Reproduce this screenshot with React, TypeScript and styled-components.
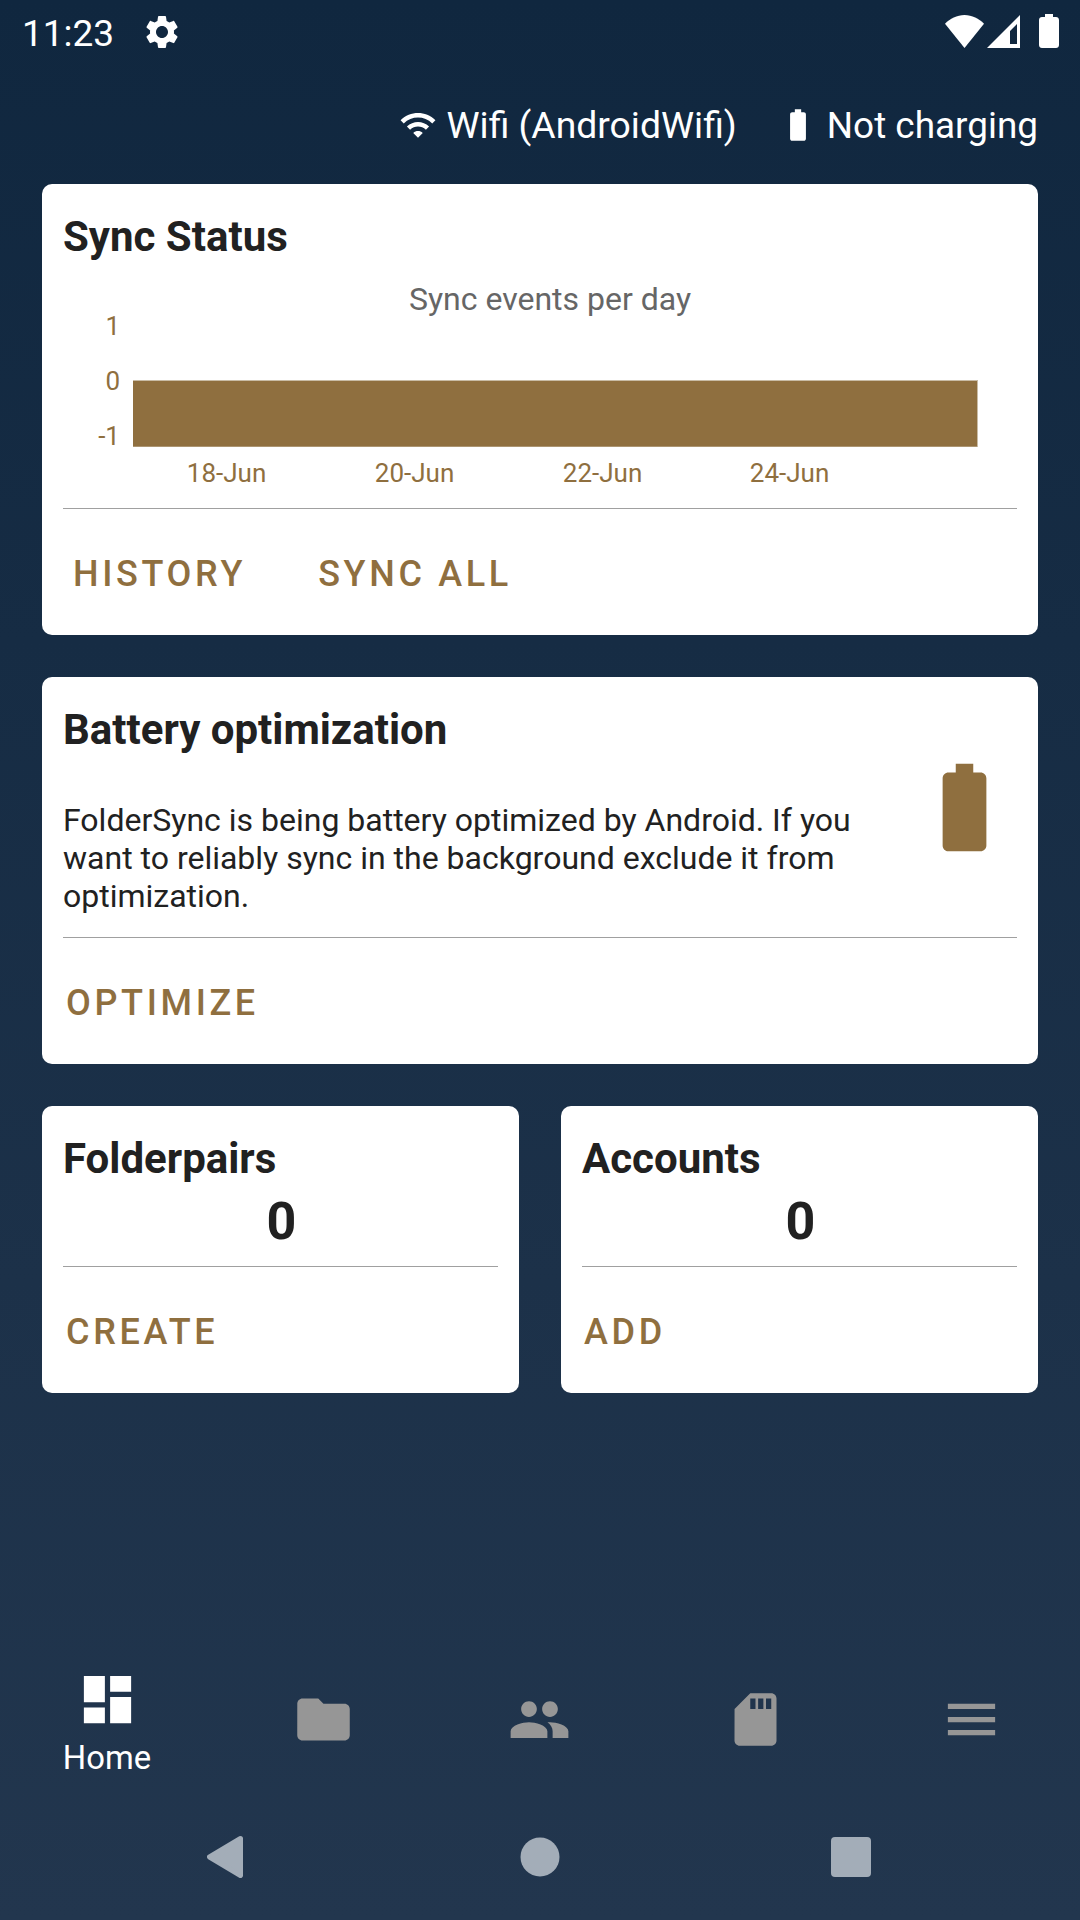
import React from "react";
import styled, { createGlobalStyle } from "styled-components";

const BROWN = "#8f6f3f";
const NAV_KEY = "#a3adb8";

const GlobalStyle = createGlobalStyle`
  html, body {
    margin: 0;
    padding: 0;
    background: #10273f;
  }
  * {
    box-sizing: border-box;
  }
`;

const Screen = styled.div`
  width: 1080px;
  height: 1920px;
  display: flex;
  flex-direction: column;
  overflow: hidden;
  font-family: Roboto, "Liberation Sans", sans-serif;
  background: linear-gradient(180deg, #10273f 0%, #22364e 100%);
`;

const StatusBar = styled.div`
  height: 63px;
  flex: none;
  display: flex;
  align-items: center;
  padding: 0 21px 0 22px;
  color: #fff;
  font-size: 37px;
`;

const Clock = styled.span`
  margin-right: 28px;
  padding-top: 3px;
`;

const Spacer = styled.div`
  flex: 1;
`;

const StatusGlyphs = styled.div`
  display: flex;
  align-items: flex-end;
  gap: 3px;
  padding-bottom: 2px;
`;

const StatusBattery = styled.svg`
  margin-left: 16px;
`;

const Connection = styled.div`
  height: 121px;
  flex: none;
  display: flex;
  justify-content: flex-end;
  align-items: center;
  gap: 42px;
  padding: 3px 42px 0 0;
  color: #fff;
`;

const ConnectionItem = styled.div<{ $size: number }>`
  display: flex;
  align-items: center;
  gap: 10px;
  font-size: ${(p) => p.$size}px;
`;

const Content = styled.div`
  flex: 1;
  display: flex;
  flex-direction: column;
  gap: 42px;
  padding: 0 42px;
`;

const Card = styled.section<{ $half?: boolean }>`
  background: #fff;
  border-radius: 10px;
  padding: 0 21px;
  flex: ${(p) => (p.$half ? "1" : "none")};
  min-width: 0;
`;

const Row = styled.div`
  display: flex;
  gap: 42px;
`;

const Title = styled.h2<{ $h: number }>`
  margin: 0;
  padding-top: 28px;
  height: ${(p) => p.$h}px;
  font-size: 42px;
  line-height: 50px;
  font-weight: 700;
  color: #212121;
`;

const Divider = styled.div`
  height: 1px;
  background: #a0a0a0;
`;

const Actions = styled.div<{ $pad?: number }>`
  height: 126px;
  display: flex;
  align-items: center;
  gap: 72px;
  padding-top: 4px;
  padding-left: ${(p) => p.$pad ?? 3}px;
`;

const Action = styled.button`
  border: 0;
  padding: 0;
  background: none;
  font: 500 36px Roboto, sans-serif;
  letter-spacing: 3.65px;
  color: ${BROWN};
`;

const ChartFrame = styled.svg`
  display: block;
  width: 954px;
  height: 244px;
  font-family: Roboto, sans-serif;
`;

const OptimizeBody = styled.div`
  display: flex;
  height: 160px;
`;

const BodyText = styled.p`
  margin: 0;
  width: 830px;
  font-size: 32px;
  line-height: 38px;
  color: #212121;
  padding-top: 24px;
`;

const BatteryWrap = styled.div`
  flex: 1;
  display: flex;
  justify-content: flex-end;
  margin-top: -22px;
`;

const Count = styled.div`
  text-align: center;
  font-size: 52px;
  line-height: 58px;
  font-weight: 700;
  color: #212121;
  height: 74px;
  padding: 1px 0 0 2px;
`;

const BottomNav = styled.nav`
  flex: none;
  height: 150px;
  display: grid;
  grid-template-columns: repeat(5, 1fr);
`;

const NavItem = styled.div<{ $active?: boolean }>`
  display: flex;
  flex-direction: column;
  align-items: center;
  justify-content: ${(p) => (p.$active ? "flex-start" : "center")};
  padding-top: ${(p) => (p.$active ? "24px" : "0")};
  padding-right: 2px;
  color: ${(p) => (p.$active ? "#fff" : "#969696")};
  font-size: 32.8px;
`;

const NavLabel = styled.span`
  margin-top: 8px;
`;

const SystemNav = styled.div`
  flex: none;
  height: 126px;
  display: flex;
  justify-content: center;
  align-items: center;
  padding-right: 2px;
`;

const BackKey = styled.svg`
  margin-right: 277px;
`;

const HomeKey = styled.svg`
  margin-right: 271px;
`;

type IconProps = { d: string; size: number; color?: string };

const Icon = ({ d, size, color = "currentColor" }: IconProps) => (
  <svg width={size} height={size} viewBox="0 0 24 24" fill={color}>
    <path d={d} />
  </svg>
);

const icons = {
  dashboard: "M3 13h8V3H3v10zm0 8h8v-6H3v6zm10 0h8V11h-8v10zm0-18v6h8V3h-8z",
  folder: "M10 4H4c-1.1 0-1.99.9-1.99 2L2 18c0 1.1.9 2 2 2h16c1.1 0 2-.9 2-2V8c0-1.1-.9-2-2-2h-8l-2-2z",
  people:
    "M16 11c1.66 0 2.99-1.34 2.99-3S17.66 5 16 5c-1.66 0-3 1.34-3 3s1.34 3 3 3zm-8 0c1.66 0 2.99-1.34 2.99-3S9.66 5 8 5C6.34 5 5 6.34 5 8s1.34 3 3 3zm0 2c-2.33 0-7 1.17-7 3.5V19h14v-2.5c0-2.33-4.67-3.5-7-3.5zm8 0c-.29 0-.62.02-.97.05 1.16.84 1.97 1.97 1.97 3.45V19h6v-2.5c0-2.33-4.67-3.5-7-3.5z",
  sd: "M18 2h-8L4.02 8 4 20c0 1.1.9 2 2 2h12c1.1 0 2-.9 2-2V4c0-1.1-.9-2-2-2zm-6 6h-2V4h2v4zm3 0h-2V4h2v4zm3 0h-2V4h2v4z",
  menu: "M3 18h18v-2H3v2zm0-5h18v-2H3v2zm0-7v2h18V6H3z",
  wifi: "M1 9l2 2c4.97-4.97 13.03-4.97 18 0l2-2C16.93 2.93 7.08 2.93 1 9zm8 8l3 3 3-3c-1.65-1.66-4.34-1.66-6 0zm-4-4l2 2c2.76-2.76 7.24-2.76 10 0l2-2C15.14 9.14 8.87 9.14 5 13z",
  battery:
    "M15.67 4H14V2h-4v2H8.33C7.6 4 7 4.6 7 5.33v15.33C7 21.4 7.6 22 8.33 22h7.33c.74 0 1.34-.6 1.34-1.33V5.33C17 4.6 16.4 4 15.67 4z",
  settings:
    "M19.14 12.94c.04-.3.06-.61.06-.94 0-.32-.02-.64-.07-.94l2.03-1.58c.18-.14.23-.41.12-.61l-1.92-3.32c-.12-.22-.37-.29-.59-.22l-2.39.96c-.5-.38-1.03-.7-1.62-.94l-.36-2.54c-.04-.24-.24-.41-.48-.41h-3.84c-.24 0-.43.17-.47.41l-.36 2.54c-.59.24-1.13.57-1.62.94l-2.39-.96c-.22-.08-.47 0-.59.22L2.74 8.87c-.12.21-.08.47.12.61l2.03 1.58c-.05.3-.09.63-.09.94s.02.64.07.94l-2.03 1.58c-.18.14-.23.41-.12.61l1.92 3.32c.12.22.37.29.59.22l2.39-.96c.5.38 1.03.7 1.62.94l.36 2.54c.05.24.24.41.48.41h3.84c.24 0 .44-.17.47-.41l.36-2.54c.59-.24 1.13-.56 1.62-.94l2.39.96c.22.08.47 0 .59-.22l1.92-3.32c.12-.22.07-.47-.12-.61l-2.01-1.58zM12 15.6c-1.98 0-3.6-1.62-3.6-3.6s1.62-3.6 3.6-3.6 3.6 1.62 3.6 3.6-1.62 3.6-3.6 3.6z",
};

const Chart = () => (
  <ChartFrame viewBox="0 0 954 244">
    <text x="487" y="46" fontSize="32" fill="#666" textAnchor="middle">
      Sync events per day
    </text>
    <g fontSize="26" fill={BROWN} textAnchor="end">
      <text x="57" y="71">1</text>
      <text x="57" y="126">0</text>
      <text x="57" y="181">-1</text>
    </g>
    <rect x="70" y="116" width="845" height="67" fill="#c9bca6" />
    <rect x="70" y="117" width="844" height="65.5" fill={BROWN} />
    <g fontSize="26" fill={BROWN} textAnchor="middle">
      <text x="163.6" y="218">18-Jun</text>
      <text x="351.6" y="218">20-Jun</text>
      <text x="539.6" y="218">22-Jun</text>
      <text x="726.6" y="218">24-Jun</text>
    </g>
  </ChartFrame>
);

export default function App() {
  return (
    <Screen>
      <GlobalStyle />
      <StatusBar>
        <Clock>11:23</Clock>
        <Icon d={icons.settings} size={40} />
        <Spacer />
        <StatusGlyphs>
          <svg width="39" height="33" viewBox="0 0 39 33" fill="#fff">
            <path d="M19.5 33L0 8.7C5 3.5 12 0 19.5 0S34 3.5 39 8.7z" />
          </svg>
          <svg width="33" height="33" viewBox="0 0 33 33" fill="#fff">
            <path fillRule="evenodd" d="M0 33L33 0v33zM23 16v13h7V9z" />
          </svg>
          <StatusBattery width="20" height="34" viewBox="0 0 20 34" fill="#fff">
            <path d="M6 0h8v3h3c1.7 0 3 1.3 3 3v25c0 1.7-1.3 3-3 3H3c-1.7 0-3-1.3-3-3V6c0-1.7 1.3-3 3-3h3z" />
          </StatusBattery>
        </StatusGlyphs>
      </StatusBar>
      <Connection>
        <ConnectionItem $size={37.3}>
          <Icon d={icons.wifi} size={38} />
          Wifi (AndroidWifi)
        </ConnectionItem>
        <ConnectionItem $size={36.9}>
          <Icon d={icons.battery} size={38} />
          Not charging
        </ConnectionItem>
      </Connection>
      <Content>
        <Card>
          <Title $h={80}>Sync Status</Title>
          <Chart />
          <Divider />
          <Actions $pad={10}>
            <Action>HISTORY</Action>
            <Action>SYNC ALL</Action>
          </Actions>
        </Card>
        <Card>
          <Title $h={100}>Battery optimization</Title>
          <OptimizeBody>
            <BodyText>
              FolderSync is being battery optimized by Android. If you want to reliably sync in the background exclude it
              from optimization.
            </BodyText>
            <BatteryWrap>
              <Icon d={icons.battery} size={105} color={BROWN} />
            </BatteryWrap>
          </OptimizeBody>
          <Divider />
          <Actions>
            <Action>OPTIMIZE</Action>
          </Actions>
        </Card>
        <Row>
          <Card $half>
            <Title $h={86}>Folderpairs</Title>
            <Count>0</Count>
            <Divider />
            <Actions $pad={3}>
              <Action>CREATE</Action>
            </Actions>
          </Card>
          <Card $half>
            <Title $h={86}>Accounts</Title>
            <Count>0</Count>
            <Divider />
            <Actions $pad={2}>
              <Action>ADD</Action>
            </Actions>
          </Card>
        </Row>
      </Content>
      <BottomNav>
        <NavItem $active>
          <Icon d={icons.dashboard} size={63} />
          <NavLabel>Home</NavLabel>
        </NavItem>
        <NavItem>
          <Icon d={icons.folder} size={63} />
        </NavItem>
        <NavItem>
          <Icon d={icons.people} size={63} />
        </NavItem>
        <NavItem>
          <Icon d={icons.sd} size={63} />
        </NavItem>
        <NavItem>
          <Icon d={icons.menu} size={63} />
        </NavItem>
      </BottomNav>
      <SystemNav>
        <BackKey width="36" height="42" viewBox="0 0 36 42">
          <path d="M33.5 2.5L2.5 21l31 18.5z" fill={NAV_KEY} stroke={NAV_KEY} strokeWidth="5" strokeLinejoin="round" />
        </BackKey>
        <HomeKey width="40" height="40" viewBox="0 0 40 40">
          <circle cx="20" cy="20" r="19.5" fill={NAV_KEY} />
        </HomeKey>
        <svg width="40" height="40" viewBox="0 0 40 40">
          <rect width="40" height="40" rx="4" fill={NAV_KEY} />
        </svg>
      </SystemNav>
    </Screen>
  );
}
